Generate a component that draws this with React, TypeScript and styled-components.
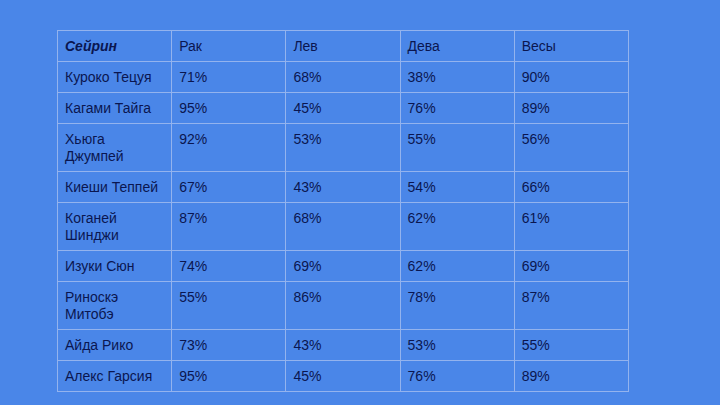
import React from "react";
import styled, { createGlobalStyle } from "styled-components";

const Global = createGlobalStyle`
  html, body { margin: 0; padding: 0; }
  body {
    width: 720px;
    height: 405px;
    overflow: hidden;
    background: #4a86e8;
    font-family: "Liberation Sans", Arial, sans-serif;
  }
`;

const Page = styled.div`
  width: 720px;
  height: 405px;
  box-sizing: border-box;
  padding: 30px 0 0 57px;
  background: #4a86e8;
`;

const Table = styled.table`
  border-collapse: collapse;
  table-layout: fixed;
  width: 572px;
  color: #0a1650;
  font-size: 14px;
  line-height: 17px;
`;

const Cell = styled.td<{ $head?: boolean }>`
  border: 1px solid #93b3ee;
  padding: 7px 7px 6px 7px;
  vertical-align: top;
  text-align: left;
  font-weight: ${(p) => (p.$head ? 700 : 400)};
  font-style: ${(p) => (p.$head ? "italic" : "normal")};
`;

const header = ["Сейрин", "Рак", "Лев", "Дева", "Весы"];
const rows: string[][] = [
  ["Куроко Тецуя", "71%", "68%", "38%", "90%"],
  ["Кагами Тайга", "95%", "45%", "76%", "89%"],
  ["Хьюга Джумпей", "92%", "53%", "55%", "56%"],
  ["Киеши Теппей", "67%", "43%", "54%", "66%"],
  ["Коганей Шинджи", "87%", "68%", "62%", "61%"],
  ["Изуки Сюн", "74%", "69%", "62%", "69%"],
  ["Риноскэ Митобэ", "55%", "86%", "78%", "87%"],
  ["Айда Рико", "73%", "43%", "53%", "55%"],
  ["Алекс Гарсия", "95%", "45%", "76%", "89%"],
];

export default function App() {
  return (
    <>
      <Global />
      <Page>
        <Table>
          <colgroup>
            {header.map((h) => (
              <col key={h} style={{ width: "114px" }} />
            ))}
          </colgroup>
          <tbody>
            <tr>
              {header.map((h, i) => (
                <Cell key={h} $head={i === 0}>
                  {h}
                </Cell>
              ))}
            </tr>
            {rows.map((r) => (
              <tr key={r[0]}>
                {r.map((c, i) => (
                  <Cell key={i}>{c}</Cell>
                ))}
              </tr>
            ))}
          </tbody>
        </Table>
      </Page>
    </>
  );
}
